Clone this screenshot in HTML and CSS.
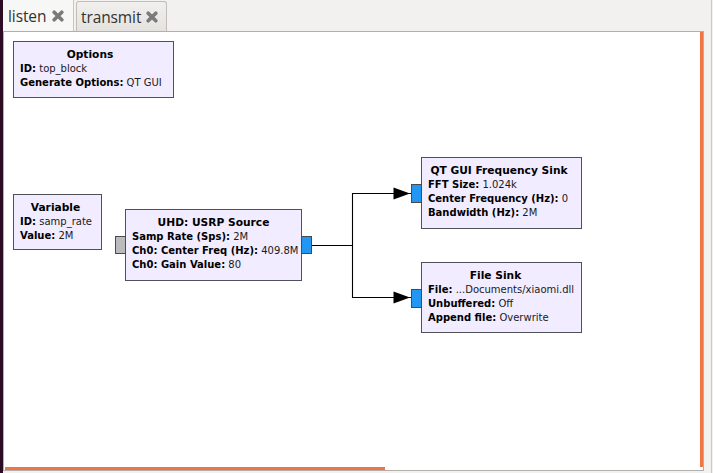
FILE: index.html
```html
<!DOCTYPE html>
<html>
<head>
<meta charset="utf-8">
<link rel="stylesheet" href="styles.css">
</head>
<body>
<div class="edge"></div>
<div class="window">
  <div class="tabbar">
    <div class="tab tab-active">
      <span class="tab-label">listen</span>
      <svg class="tab-close" viewBox="0 0 12 12" width="12" height="12"><path d="M2.2 2.2L9.8 9.8M9.8 2.2L2.2 9.8"/></svg>
    </div>
    <div class="tab tab-inactive">
      <span class="tab-label">transmit</span>
      <svg class="tab-close" viewBox="0 0 12 12" width="12" height="12"><path d="M2.2 2.2L9.8 9.8M9.8 2.2L2.2 9.8"/></svg>
    </div>
  </div>
  <div class="page">
    <div class="canvas">
      <svg class="wires" width="699" height="438" viewBox="0 0 699 438">
        <path d="M308 213.5H348.5M348.5 161V266M348.5 161.5H407M348.5 265.5H407" />
        <polygon points="389.5,155.5 406,161.5 389.5,167.5"/>
        <polygon points="389.5,259.5 406,265.5 389.5,271.5"/>
      </svg>

      <div class="block b-options">
        <div class="title">Options</div>
        <div class="param"><b>ID:</b> top_block</div>
        <div class="param"><b>Generate Options:</b> QT GUI</div>
      </div>

      <div class="block b-variable">
        <div class="title">Variable</div>
        <div class="param"><b>ID:</b> samp_rate</div>
        <div class="param"><b>Value:</b> 2M</div>
      </div>

      <div class="block b-usrp">
        <div class="title">UHD: USRP Source</div>
        <div class="param"><b>Samp Rate (Sps):</b> 2M</div>
        <div class="param"><b>Ch0: Center Freq (Hz):</b> 409.8M</div>
        <div class="param"><b>Ch0: Gain Value:</b> 80</div>
        <div class="port port-in port-gray"></div>
        <div class="port port-out port-blue"></div>
      </div>

      <div class="block b-qt">
        <div class="title">QT GUI Frequency Sink</div>
        <div class="param"><b>FFT Size:</b> 1.024k</div>
        <div class="param"><b>Center Frequency (Hz):</b> 0</div>
        <div class="param"><b>Bandwidth (Hz):</b> 2M</div>
        <div class="port port-in port-blue"></div>
      </div>

      <div class="block b-file">
        <div class="title">File Sink</div>
        <div class="param"><b>File:</b> ...Documents/xiaomi.dll</div>
        <div class="param"><b>Unbuffered:</b> Off</div>
        <div class="param"><b>Append file:</b> Overwrite</div>
        <div class="port port-in port-blue"></div>
      </div>

      <div class="scroll-v"></div>
      <div class="scroll-h"></div>
    </div>
  </div>
</div>
</body>
</html>
```

FILE: styles.css
```css
html, body {
  margin: 0;
  padding: 0;
}
body {
  width: 713px;
  height: 473px;
  overflow: hidden;
  display: flex;
  background: #f2f1f0;
  font-family: "DejaVu Sans", sans-serif;
}
.edge {
  flex: none;
  width: 3px;
  height: 473px;
  background: #2c0c23;
}
.window {
  flex: none;
  width: 708px;
  border-right: 1px solid #cdcac5;
  display: flex;
  flex-direction: column;
}
.tabbar {
  height: 31px;
  display: flex;
  align-items: flex-end;
  gap: 2px;
}
.tab {
  box-sizing: border-box;
  display: flex;
  align-items: center;
  color: #333333;
  font-family: "Open Sans", sans-serif;
  font-size: 15.5px;
}
.tab-active {
  width: 71px;
  height: 31px;
  padding-left: 5px;
  background: #f7f7f6;
  border-right: 1px solid #c9c6c1;
}
.tab-inactive {
  width: 91px;
  height: 30px;
  padding-left: 4px;
  border: 1px solid #c1beb9;
  border-bottom: none;
  border-radius: 3px 3px 0 0;
  background: linear-gradient(#f1f0ee, #e4e2df);
}
.tab-label {
  line-height: 20px;
  letter-spacing: -0.1px;
}
.tab-close {
  margin-left: auto;
  margin-right: 9px;
  flex: none;
}
.tab-inactive .tab-close {
  margin-right: 8px;
}
.tab-close path {
  stroke: #7a7a7a;
  stroke-width: 3.6;
  stroke-linecap: round;
  fill: none;
}
.page {
  width: 701px;
  height: 440px;
  box-sizing: border-box;
  border: 1px solid #b3b0ab;
  background: #ffffff;
}
.canvas {
  position: relative;
  width: 699px;
  height: 438px;
  overflow: hidden;
}
.wires {
  position: absolute;
  left: 0;
  top: 0;
}
.wires path {
  stroke: #000;
  stroke-width: 1.1;
  fill: none;
}
.wires polygon {
  fill: #000;
}
.block {
  position: absolute;
  box-sizing: border-box;
  background: #f1ecff;
  border: 1px solid #505058;
  padding: 5px 12px 0 6px;
  color: #000;
}
.title {
  font-weight: bold;
  font-size: 10.67px;
  line-height: 15px;
  text-align: center;
  white-space: nowrap;
}
.param {
  font-size: 10px;
  line-height: 14px;
  white-space: nowrap;
  color: #1a1a1a;
}
.param b {
  color: #000;
}
.b-options {
  left: 9px;
  top: 9px;
  width: 161px;
  height: 57px;
  padding-right: 13px;
}
.b-variable {
  left: 9px;
  top: 162px;
  width: 89px;
  height: 56px;
  padding-right: 10px;
}
.b-usrp {
  left: 121px;
  top: 177px;
  width: 177px;
  height: 72px;
  padding-right: 6px;
}
.b-qt {
  left: 417px;
  top: 125px;
  width: 161px;
  height: 72px;
  padding-right: 11px;
}
.b-file {
  left: 417px;
  top: 230px;
  width: 161px;
  height: 71px;
  padding-right: 18px;
}
.port {
  position: absolute;
  box-sizing: border-box;
  width: 11px;
  height: 18px;
  top: calc(50% - 9px);
  border: 1px solid #4a4a4a;
}
.port-in {
  left: -11px;
}
.port-out {
  right: -11px;
}
.port-blue {
  background: #2196f3;
}
.port-gray {
  background: #bbbbbb;
}
.b-qt .port, .b-file .port {
  height: 19px;
}
.scroll-v {
  position: absolute;
  right: 0;
  top: 0;
  width: 3px;
  height: 435px;
  background: #ef7644;
}
.scroll-h {
  position: absolute;
  left: 1px;
  bottom: 0;
  width: 380px;
  height: 3px;
  background: #ef7644;
}
```
